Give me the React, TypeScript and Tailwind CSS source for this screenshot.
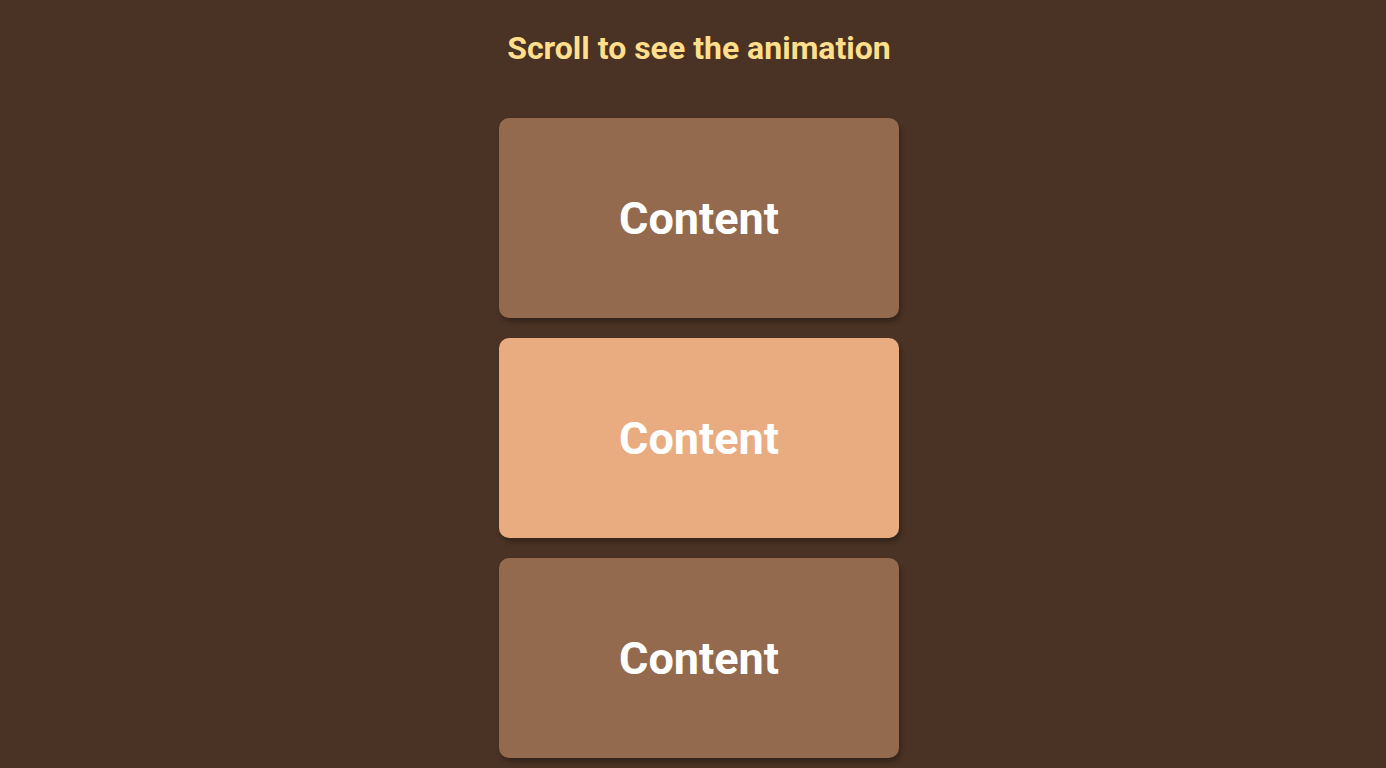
export default function App() {
  const boxes = [false, true, false];
  return (
    <div
      className="min-h-screen bg-[#4a3324] flex flex-col items-center overflow-hidden pl-3"
      style={{ fontFamily: 'Roboto, "Liberation Sans", sans-serif' }}
    >
      <h1 className="mt-[30px] h-[37px] leading-[37px] text-[32px] font-bold text-[#ffdf8c]">
        Scroll to see the animation
      </h1>

      <div className="mt-[51px] flex flex-col gap-5">
        {boxes.map((active, i) => (
          <div
            key={i}
            className={
              active
                ? 'w-[400px] h-[200px] rounded-[10px] bg-[#e9ab80] shadow-[2px_4px_5px_rgba(0,0,0,0.3)] flex items-center justify-center'
                : 'w-[400px] h-[200px] rounded-[10px] bg-[#936a4d] shadow-[2px_4px_5px_rgba(0,0,0,0.3)] flex items-center justify-center'
            }
          >
            <span className="text-[45px] leading-[53px] font-bold text-white">Content</span>
          </div>
        ))}
      </div>
    </div>
  );
}
